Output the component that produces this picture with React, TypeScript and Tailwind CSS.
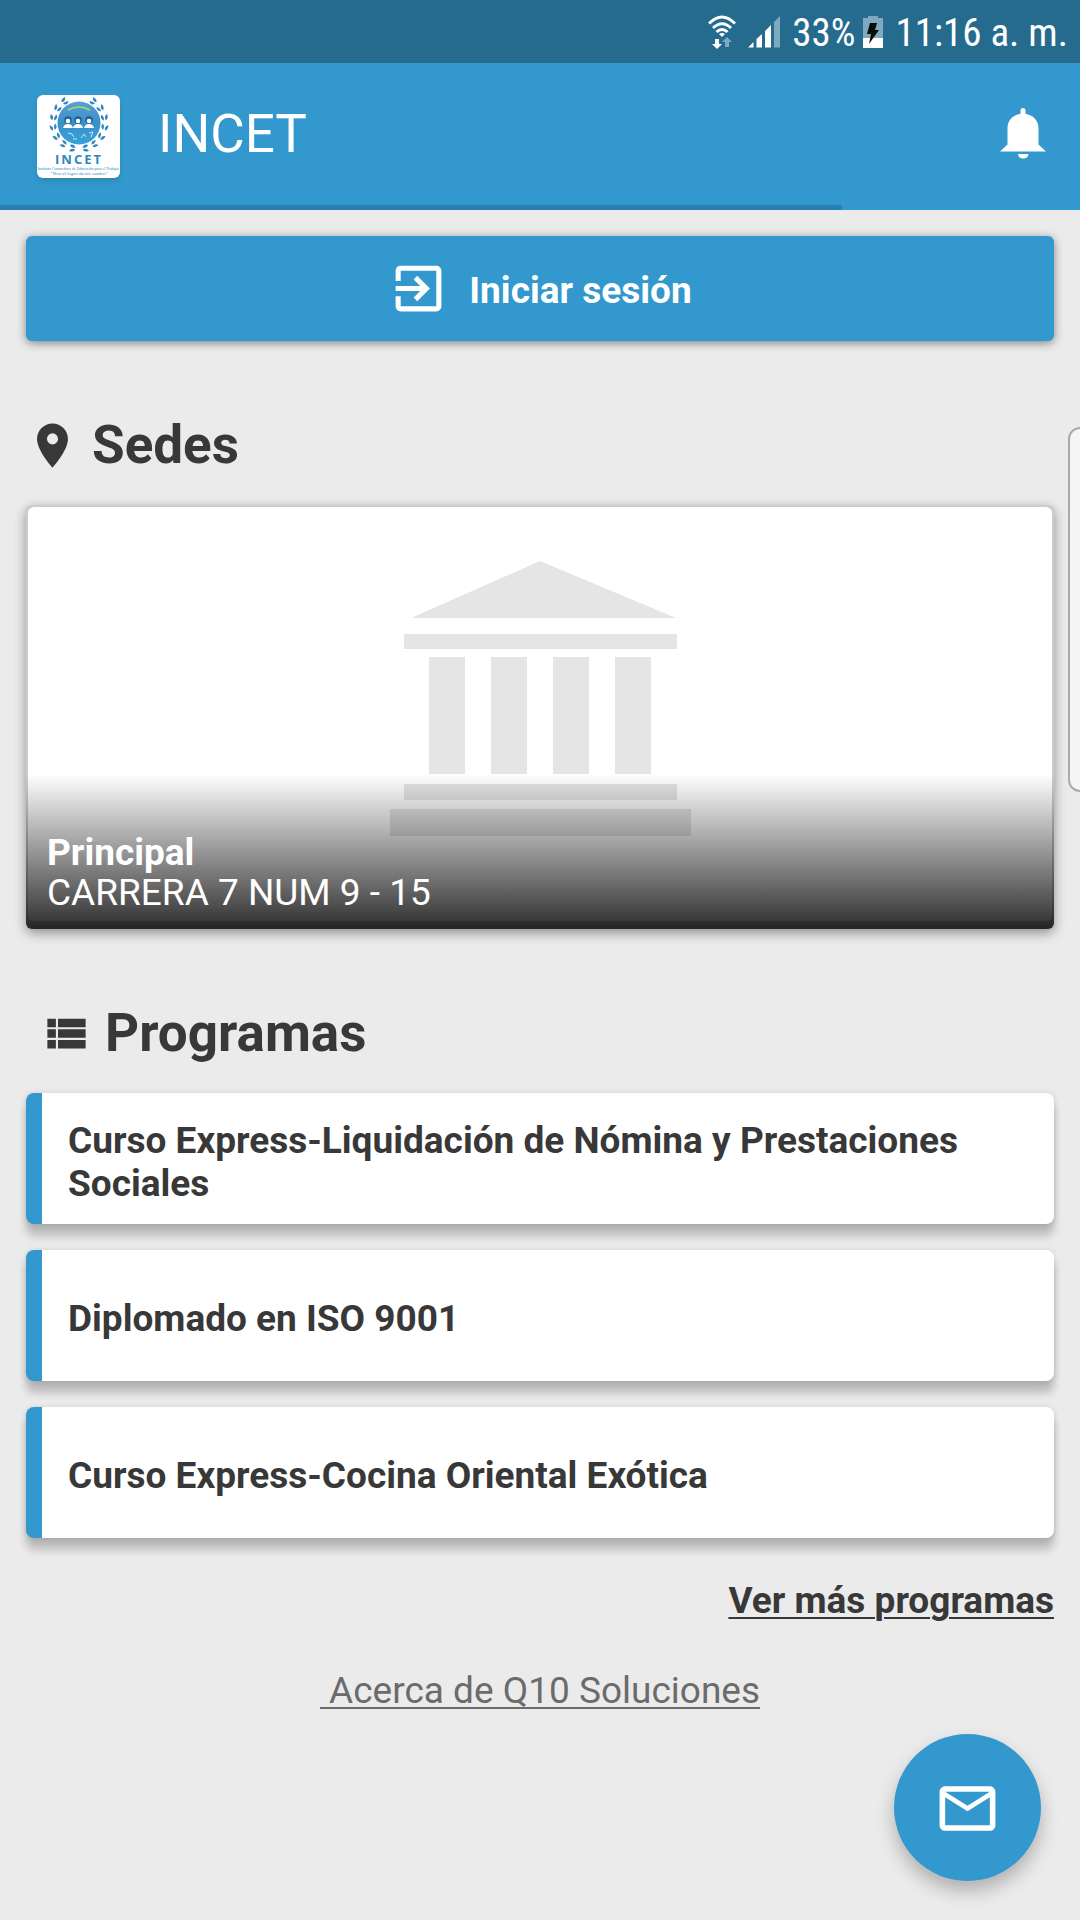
import type { ReactNode } from "react"
import { MdExitToApp, MdLocationOn, MdMailOutline, MdViewList } from "react-icons/md"

const programs = [
  "Curso Express-Liquidación de Nómina y Prestaciones Sociales",
  "Diplomado en ISO 9001",
  "Curso Express-Cocina Oriental Exótica",
]

// Angles of the leaf pairs on the left half of the wreath
const leafAngles = [98, 120, 142, 164, 186, 208, 230]

function WifiIcon() {
  return (
    <svg width="28" height="34" viewBox="0 0 28 34" aria-label="Wi-Fi">
      <g fill="none" stroke="#fff" strokeWidth="3">
        <path d="M1 8.500Q14-4.500 27 8.500" />
        <path d="M5 13Q14 4.500 23 13" />
        <path d="M8.500 17Q14 12 19.500 17" />
      </g>
      <path d="M14 22l-3-3q3-2 6 0z" fill="#fff" />
      <path d="M7 24h4v5h3l-5 5-5-5h3z" fill="#fff" />
      <path d="M17 32h4v-5h3l-5-5-5 5h3z" fill="#7fa9bf" />
    </svg>
  )
}

function SignalIcon() {
  return (
    <svg width="32" height="32" viewBox="0 0 32 32" aria-label="Señal">
      <path d="M0 31.500L5.500 26v5.500zM8.500 23L14 18v13.500H8.500zM17 15l6-6v22.500h-6z" fill="#fff" />
      <path d="M26 6l6-6v31.500h-6z" fill="#7fa9bf" />
    </svg>
  )
}

function BatteryIcon() {
  return (
    <svg width="20" height="32" viewBox="0 0 20 32" aria-label="Batería">
      <path d="M0 2h5V0h10v2h5v20H0z" fill="#7fa9bf" />
      <path d="M0 22h20v10H0z" fill="#fff" />
      <path d="M7 7h7l-2 7h4L6 28l2-10H4z" fill="#0a0a0a" />
    </svg>
  )
}

function BellIcon() {
  return (
    <svg width="46" height="52" viewBox="0 0 46 52" fill="#fff">
      <path d="M20.500 2.500a2.500 2.500 0 0 1 5 0v3.200C33 7 38.500 12.500 38.500 20v16.500L46 43.500H0l7.500-7V20C7.500 12.500 13 7 20.500 5.700z" />
      <path d="M18 46h10.500a5.300 5.300 0 0 1-10.500 0z" />
    </svg>
  )
}

function Wreath() {
  return (
    <>
      {leafAngles.map((a) => (
        <path
          key={a}
          d="M1 0q3 1 2 6q-4-2-2-6zM-1 0q-4 2-2 6q3-2 2-6z"
          transform={`rotate(${a}) translate(26 0)`}
        />
      ))}
    </>
  )
}

function Logo() {
  return (
    <svg viewBox="0 0 83 83" className="size-[83px] shrink-0 rounded-md bg-white shadow-md" role="img" aria-label="Logo INCET">
      <defs>
        <linearGradient id="globe" x1="0" y1="0" x2="0" y2="1">
          <stop offset="0" stopColor="#5a9fd6" />
          <stop offset="0.5" stopColor="#3b8fc9" />
          <stop offset="1" stopColor="#35a3da" />
        </linearGradient>
      </defs>
      <circle cx="42" cy="28" r="21.500" fill="url(#globe)" />
      <path d="M31 15q11-6 22 0" fill="none" stroke="#a8d96a" strokeWidth="1.500" />
      <g fill="#1f6295">
        {[31, 41, 52].map((x) => (
          <circle key={x} cx={x} cy="25" r="3.800" />
        ))}
      </g>
      <g fill="#fff">
        {[31, 41, 52].map((x) => (
          <g key={x}>
            <circle cx={x} cy="26" r="2.300" />
            <path d={`M${x - 5} 33q1-4 5-4t5 4z`} />
          </g>
        ))}
      </g>
      <path d="M31 38l4 1 2 3M36 44h4M44 43l3-4 2 3M52 38l4-1-2 5" fill="none" stroke="#cfe7f5" strokeWidth="1" />
      <g fill="#2f87bd">
        <g transform="translate(42 28)">
          <Wreath />
        </g>
        <g transform="translate(42 28) scale(-1 1)">
          <Wreath />
        </g>
      </g>
      <g fill="#2f87bd" textAnchor="middle">
        <text x="42" y="69" fontFamily="Open Sans, sans-serif" fontWeight="700" fontSize="13" letterSpacing="2">INCET</text>
        <text x="41" y="75" fontFamily="Liberation Serif, serif" fontSize="4">Instituto Coomeduca de Educación para el Trabajo</text>
        <text x="42" y="80" fontFamily="Liberation Serif, serif" fontStyle="italic" fontSize="5">"Vive el logro de tus sueños"</text>
      </g>
    </svg>
  )
}

function Building() {
  return (
    <svg width="301" height="275" viewBox="0 0 301 275" fill="#e5e5e5" aria-hidden="true">
      <path d="M21 57L150 0l136 57z" />
      <path d="M14 73h273v15H14zM14 223h273v16H14zM0 248h301v27H0z" />
      <path d="M39 96h36v117H39zM101 96h36v117h-36zM163 96h36v117h-36zM225 96h36v117h-36z" />
    </svg>
  )
}

function SectionTitle({ icon, children }: { icon: ReactNode; children: ReactNode }) {
  return (
    <h2 className="flex items-center text-[53px] leading-[62px] font-bold">
      {icon}
      {children}
    </h2>
  )
}

export default function App() {
  return (
    <div className="relative flex min-h-screen flex-col overflow-hidden bg-[#ebebeb] font-['Roboto',sans-serif] text-[37px] text-[#383838]">
      {/* Status bar */}
      <div className="flex h-[63px] items-center justify-end bg-[#256b8e] pr-3 pl-4 text-white">
        <WifiIcon />
        <div className="ml-3">
          <SignalIcon />
        </div>
        <span className="ml-3 pt-1 font-['Roboto_Condensed','Roboto',sans-serif] text-[39px]">33%</span>
        <div className="ml-2">
          <BatteryIcon />
        </div>
        <span className="ml-3 pt-1 font-['Roboto_Condensed','Roboto',sans-serif] text-[39px]">11:16 a. m.</span>
      </div>

      {/* App bar */}
      <header className="bg-[#3398cd] text-white">
        <div className="flex h-[142px] items-center pt-1 pr-[34px] pl-[37px]">
          <Logo />
          <h1 className="ml-[38px] flex-1 pb-1 text-[53px] leading-[62px]">INCET</h1>
          <button type="button" aria-label="Notificaciones" className="pb-1">
            <BellIcon />
          </button>
        </div>
        <div className="h-[5px]">
          <div className="h-full w-[78%] bg-[#2980b3]" />
        </div>
      </header>

      <main className="flex flex-col px-[26px] pt-[26px]">
        <button
          type="button"
          className="flex h-[105px] items-center justify-center gap-5 rounded-md bg-[#3398cd] font-bold text-white shadow-[0_2px_10px_rgba(0,0,0,0.45)]"
        >
          <MdExitToApp className="size-[61px]" />
          <span className="pt-1">Iniciar sesión</span>
        </button>

        <section className="mt-[73px]">
          <SectionTitle icon={<MdLocationOn className="mr-[13px] size-[53px]" />}>Sedes</SectionTitle>
          <a
            href="#principal"
            className="relative mt-[29px] block h-[424px] overflow-hidden rounded-md bg-[#cccccc] px-[2px] pt-[2px] pb-2 shadow-[0_4px_12px_rgba(0,0,0,0.4)]"
          >
            <div className="flex h-full justify-center rounded-md bg-white pt-[54px]">
              <Building />
            </div>
            <div className="absolute inset-x-0 bottom-0 flex h-[155px] flex-col justify-end bg-linear-to-b from-black/0 to-black/82 px-[21px] pb-4 leading-10 text-white">
              <strong>Principal</strong>
              <span>CARRERA 7 NUM 9 - 15</span>
            </div>
          </a>
        </section>

        <section className="mt-[73px] flex flex-col">
          <div className="pl-[15px]">
            <SectionTitle icon={<MdViewList className="mr-[13px] size-[51px]" />}>Programas</SectionTitle>
          </div>
          <ul className="mt-[29px] flex flex-col gap-[26px]">
            {programs.map((name) => (
              <li key={name}>
                <a
                  href="#programa"
                  className="flex min-h-[131px] items-center rounded-lg border-l-[16px] border-[#3398cd] bg-white px-[26px] pt-[6px] leading-[43px] font-bold shadow-[0_12px_8px_rgba(0,0,0,0.2),0_1px_6px_rgba(0,0,0,0.15)]"
                >
                  {name}
                </a>
              </li>
            ))}
          </ul>
          <a href="#programas" className="mt-[41px] self-end leading-[43px] font-bold underline decoration-2 underline-offset-4">
            Ver más programas
          </a>
        </section>

        <a
          href="#acerca"
          className="mt-[47px] self-center leading-[43px] whitespace-pre text-[#6b6b6b] underline decoration-2 underline-offset-4"
        >
          {" Acerca de Q10 Soluciones"}
        </a>
      </main>

      {/* Edge panel handle */}
      <div className="absolute top-[427px] -right-3 h-[365px] w-6 rounded-2xl border-2 border-[#aaaaaa] bg-[#f5f5f5]" />

      <button
        type="button"
        aria-label="Enviar mensaje"
        className="fixed right-[39px] bottom-[39px] flex size-[147px] items-center justify-center rounded-full bg-[#3398cd] pt-[2px] text-white shadow-[0_10px_18px_rgba(0,0,0,0.25)]"
      >
        <MdMailOutline className="size-[67px]" />
      </button>
    </div>
  )
}
